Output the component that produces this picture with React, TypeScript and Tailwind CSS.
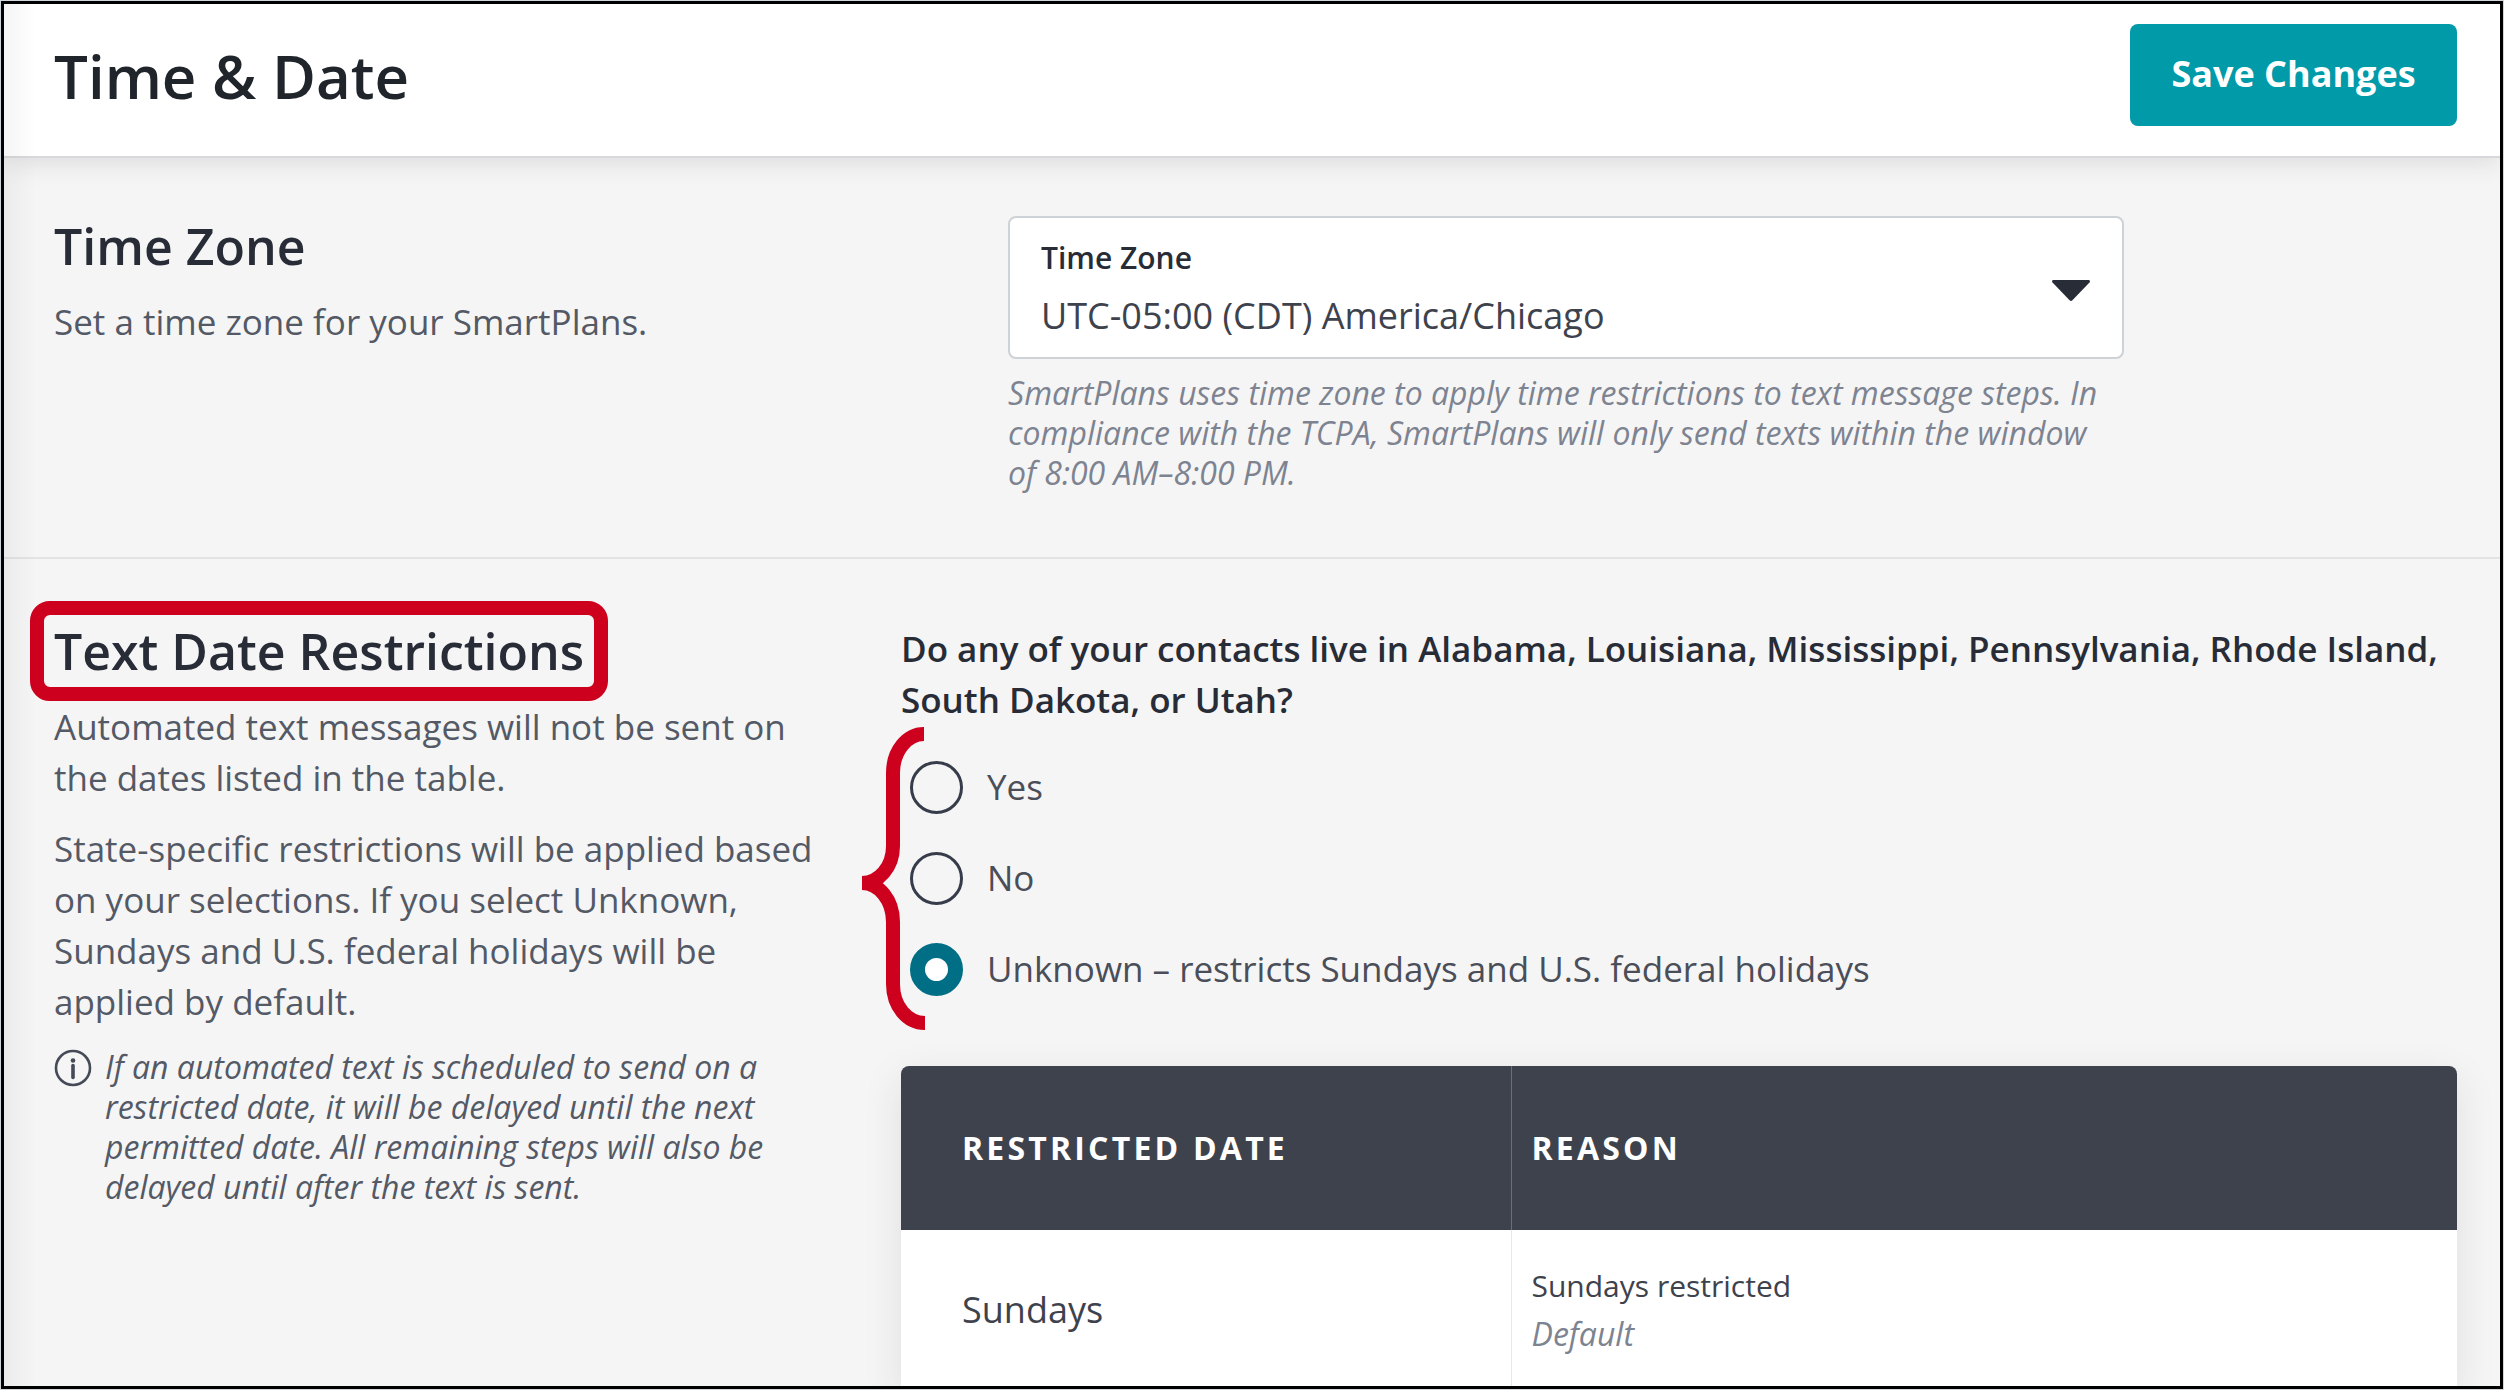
import { useState } from "react";

const choices = [
  { value: "yes", label: "Yes" },
  { value: "no", label: "No" },
  { value: "unknown", label: "Unknown – restricts Sundays and U.S. federal holidays" },
];

const restrictedDates = [
  { date: "Sundays", reason: "Sundays restricted", source: "Default" },
];

export default function App() {
  return (
    <div className="h-screen bg-gray-300 p-px font-['Open_Sans',sans-serif]">
      <div className="relative h-full overflow-hidden border-3 border-black bg-[#f5f5f5]">
        <Header />
        <main>
          <TimeZoneSection />
          <RestrictionsSection />
        </main>
        <div className="pointer-events-none absolute inset-y-0 left-0 w-8 bg-gradient-to-r from-black/4 to-transparent"></div>
      </div>
    </div>
  );
}

function Header() {
  return (
    <header className="relative flex items-start justify-between border-b-2 border-[#d6d8dc] bg-white pt-5 pr-[43px] pb-[30px] pl-[50px] shadow-[0_4px_24px_rgba(40,44,60,0.12)]">
      <h1 className="pt-4 text-[60px] leading-[72px] font-semibold text-[#20252c]">Time &amp; Date</h1>
      <button className="h-[102px] w-[327px] rounded-lg bg-[#009aa9] pb-0.5 text-[36px] font-bold text-white">
        Save Changes
      </button>
    </header>
  );
}

function TimeZoneSection() {
  return (
    <section className="grid grid-cols-[954fr_1116fr_333fr] border-b-2 border-[#e2e3e4] pt-[58px] pr-[43px] pb-16 pl-[50px]">
      <div>
        <h2 className="text-[50px] leading-[60px] font-semibold text-[#282c37]">Time Zone</h2>
        <p className="mt-5 text-[35px] leading-[51px] text-[#545966]">Set a time zone for your SmartPlans.</p>
      </div>
      <div>
        <div className="relative rounded-lg border-2 border-[#cdd2d6] bg-white px-[31px] pt-5 pb-4">
          <label htmlFor="timezone" className="block text-[30px] leading-10 font-semibold text-[#282c37]">
            Time Zone
          </label>
          <select
            id="timezone"
            className="mt-3 block h-[51px] w-full appearance-none bg-transparent text-[36px] leading-[51px] text-[#3e424c] outline-none"
          >
            <option>UTC-05:00 (CDT) America/Chicago</option>
          </select>
          <svg className="pointer-events-none absolute top-[62px] right-8 h-[21px] w-[38px]" viewBox="0 0 38 21">
            <path d="M1.5 0h35c1.4 0 1.9 1.4 1 2.4L20.4 20.2a2 2 0 0 1-2.8 0L.5 2.4C-.4 1.4.1 0 1.5 0z" fill="#282c37" />
          </svg>
        </div>
        <p className="mt-[14px] pr-4 text-[32px] leading-10 text-[#7d8390] italic">
          SmartPlans uses time zone to apply time restrictions to text message steps. In
          compliance with the TCPA, SmartPlans will only send texts within the window
          of 8:00 AM–8:00 PM.
        </p>
      </div>
    </section>
  );
}

function RestrictionsSection() {
  const [choice, setChoice] = useState("unknown");

  return (
    <section className="grid grid-cols-[847fr_1556fr] pt-[62px] pr-[43px] pl-[50px]">
      <div className="pr-16 text-[#545966]">
        <h2 className="relative w-fit text-[50px] leading-[60px] font-semibold text-[#282c37]">
          Text Date Restrictions
          <span className="absolute -inset-x-6 -inset-y-5 rounded-[20px] border-14 border-[#cd001e]"></span>
        </h2>
        <p className="mt-5 text-[35px] leading-[51px]">
          Automated text messages will not be sent on the dates listed in the table.
        </p>
        <p className="mt-5 text-[35px] leading-[51px]">
          State-specific restrictions will be applied based on your selections. If you select Unknown,
          Sundays and U.S. federal holidays will be applied by default.
        </p>
        <div className="mt-5 flex gap-[13px]">
          <InfoIcon />
          <p className="text-[32px] leading-10 italic">
            If an automated text is scheduled to send on a restricted date, it will be delayed until the next
            permitted date. All remaining steps will also be delayed until after the text is sent.
          </p>
        </div>
      </div>

      <div>
        <fieldset className="relative">
          <legend className="pt-0.5 text-[35px] leading-[51px] font-semibold text-[#282c37]">
            Do any of your contacts live in Alabama, Louisiana, Mississippi, Pennsylvania, Rhode Island,
            South Dakota, or Utah?
          </legend>
          <Brace />
          <div className="flex flex-col gap-[38px] pt-9 pl-[9px]">
            {choices.map((c) => (
              <label key={c.value} className="flex h-[53px] items-center gap-6 text-[35px] text-[#4a4e59]">
                <input
                  type="radio"
                  name="contacts"
                  value={c.value}
                  checked={choice === c.value}
                  onChange={() => setChoice(c.value)}
                  className="size-[53px] shrink-0 appearance-none rounded-full border-3 border-[#363c49] checked:border-15 checked:border-[#006f86] checked:bg-white"
                />
                {c.label}
              </label>
            ))}
          </div>
        </fieldset>

        <div className="mt-[70px] overflow-hidden rounded-t-lg bg-white shadow-[0_12px_40px_rgba(40,44,60,0.10)]">
          <table className="w-full table-fixed text-left text-[#3e424c]">
            <thead className="bg-[#3e424d] text-[32px] tracking-widest text-white">
              <tr className="h-[164px]">
                <th className="w-[610px] border-r border-[#6b6f79] pl-[61px] font-bold">RESTRICTED DATE</th>
                <th className="pl-5 font-bold">REASON</th>
              </tr>
            </thead>
            <tbody>
              {restrictedDates.map((row) => (
                <tr key={row.date} className="h-40">
                  <td className="border-r border-[#e6e7e9] pl-[61px] text-[36px]">{row.date}</td>
                  <td className="pl-5 text-[30px] leading-12">
                    <div>{row.reason}</div>
                    <div className="text-[32px] text-[#7d8390] italic">{row.source}</div>
                  </td>
                </tr>
              ))}
            </tbody>
          </table>
        </div>
      </div>
    </section>
  );
}

function InfoIcon() {
  return (
    <svg className="mt-0.5 size-[38px] shrink-0" viewBox="0 0 38 38" fill="none">
      <circle cx="19" cy="19" r="17" stroke="#454a57" strokeWidth="2.6" />
      <circle cx="19" cy="11.5" r="2.3" fill="#454a57" />
      <path d="M19 16.5v12" stroke="#454a57" strokeWidth="3.6" strokeLinecap="round" />
    </svg>
  );
}

function Brace() {
  return (
    <svg className="absolute top-0.5 -left-[39px] h-[303px] w-[63px]" viewBox="0 0 63 303" fill="none">
      <path
        d="M62 7C45 7 31 24 31 46v73c0 21-14 37-31 37 17 0 31 17 31 39v62c0 22 14 39 32 39"
        stroke="#cd001e"
        strokeWidth="14"
      />
    </svg>
  );
}
